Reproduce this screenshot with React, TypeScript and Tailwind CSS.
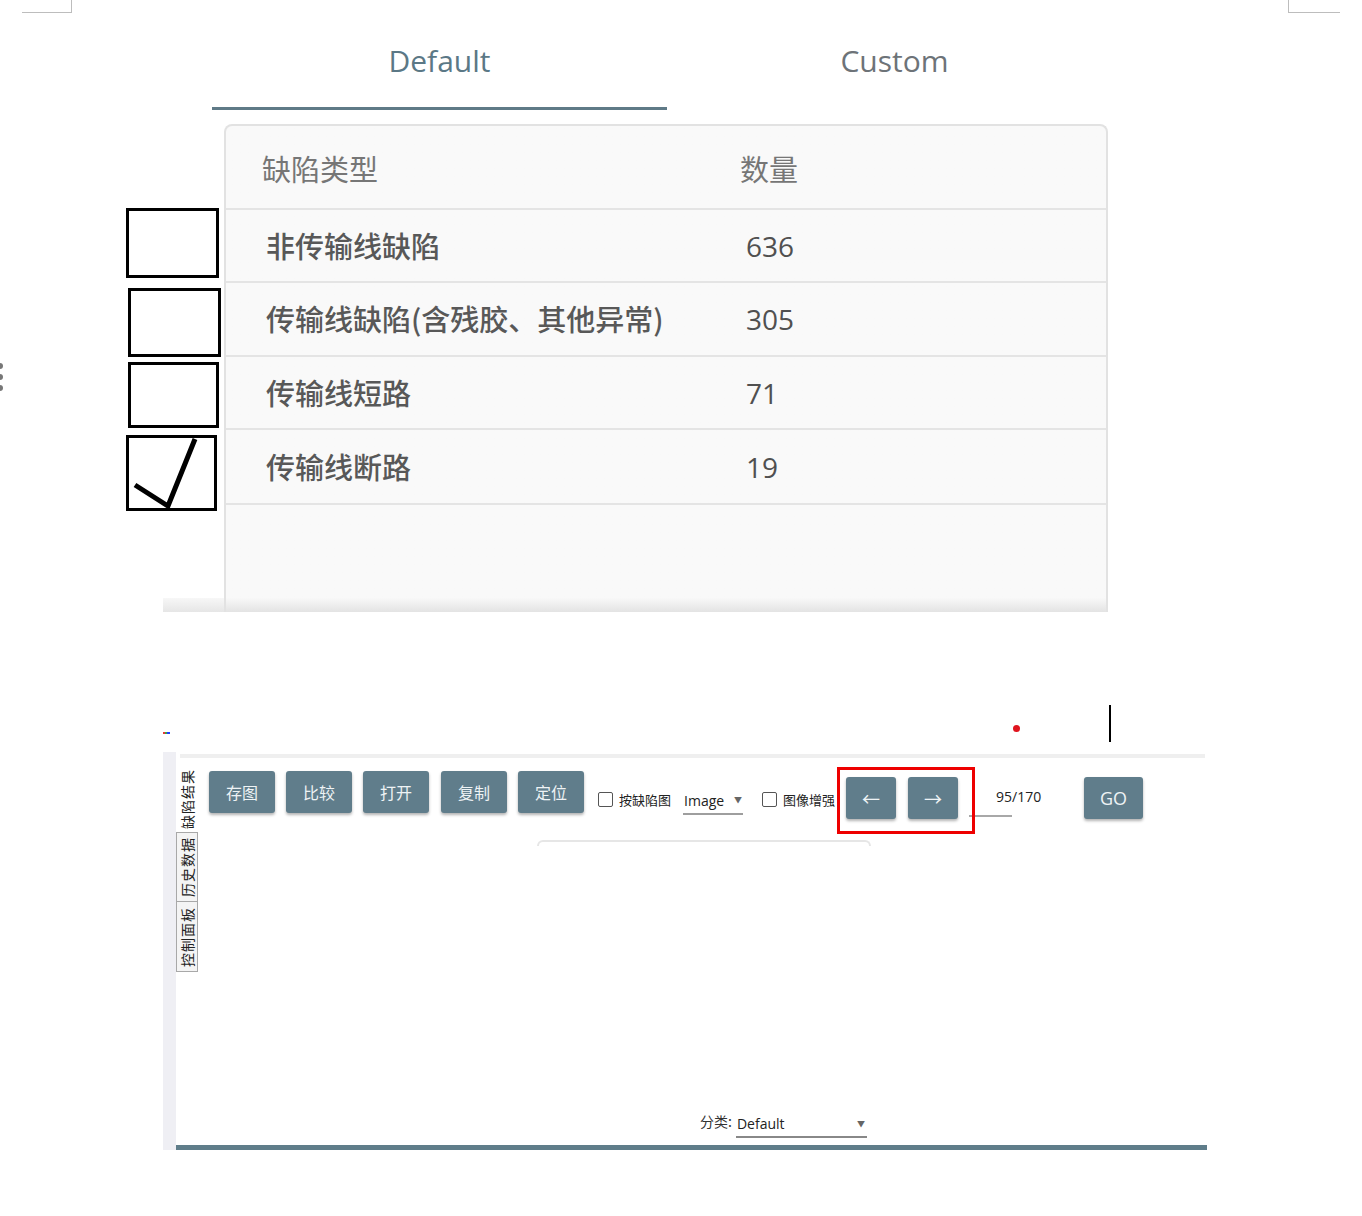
import React from "react";

const cjk = { fontFamily: '"Noto Sans CJK SC", "Noto Sans", sans-serif' };
const latin = { fontFamily: '"Open Sans", "Noto Sans CJK SC", sans-serif' };

const rows = [
  { name: "非传输线缺陷", count: "636", h: "h-[73px]" },
  { name: "传输线缺陷(含残胶、其他异常)", count: "305", h: "h-[74px]" },
  { name: "传输线短路", count: "71", h: "h-[73px]" },
  { name: "传输线断路", count: "19", h: "h-[75px]" },
];

function Btn({ children, w = "w-[66px]", cls = "" }: { children: React.ReactNode; w?: string; cls?: string }) {
  return (
    <div
      className={`${w} h-[42px] rounded-[3px] bg-[#607d8b] text-[#eef3f5] flex items-center justify-center text-[16px] shadow-[0_2px_3px_rgba(0,0,0,0.3)] ${cls}`}
    >
      {children}
    </div>
  );
}

function SmallCheck() {
  return <div className="w-[15px] h-[15px] border border-[#555] rounded-[2px] bg-white shrink-0" />;
}

function VText({ children }: { children: React.ReactNode }) {
  return (
    <span className="[writing-mode:vertical-rl] [text-orientation:sideways] rotate-180 tracking-[1px] leading-none">
      {children}
    </span>
  );
}

export default function App() {
  return (
    <div className="relative w-[1362px] h-[1216px] bg-white overflow-hidden" style={cjk}>
      {/* page corner marks */}
      <div className="absolute left-[22px] top-[12px] w-[50px] h-px bg-[#bdbdbd]" />
      <div className="absolute left-[71px] top-0 w-px h-[13px] bg-[#bdbdbd]" />
      <div className="absolute left-[1288px] top-[12px] w-[52px] h-px bg-[#bdbdbd]" />
      <div className="absolute left-[1288px] top-0 w-px h-[13px] bg-[#bdbdbd]" />
      {/* dots at left edge */}
      <div className="absolute left-[-3px] top-[363px] w-[6px] h-[6px] rounded-full bg-[#777]" />
      <div className="absolute left-[-3px] top-[374px] w-[6px] h-[6px] rounded-full bg-[#777]" />
      <div className="absolute left-[-3px] top-[385px] w-[6px] h-[6px] rounded-full bg-[#777]" />

      {/* tabs */}
      <div className="flex ml-[212px] pt-[40px]" style={latin}>
        <div className="w-[455px] flex flex-col items-center">
          <div className="h-[42px] leading-[42px] text-[30px] text-[#5b7886]">Default</div>
          <div className="mt-[25px] h-[3px] w-full bg-[#5f7a87]" />
        </div>
        <div className="w-[455px] flex flex-col items-center">
          <div className="h-[42px] leading-[42px] text-[30px] text-[#6d7378]">Custom</div>
        </div>
      </div>

      {/* table area */}
      <div className="relative mt-[14px] ml-[163px] w-[945px] pl-[61px]">
        <div className="absolute left-0 bottom-0 w-[61px] h-[14px] bg-gradient-to-b from-[#f7f7f7] to-[#e6e6e6]" />
        <div className="h-[488px] border-2 border-b-0 border-[#e2e2e2] rounded-t-[8px] flex flex-col bg-gradient-to-b from-[#f9f9f9] from-[97%] to-[#e3e3e3]">
          <div className="h-[84px] shrink-0 flex items-center border-b-2 border-[#e4e4e4] text-[29px] text-[#767676] pt-[4px]">
            <div className="w-[514px] pl-[36px]">缺陷类型</div>
            <div>数量</div>
          </div>
          {rows.map((r) => (
            <div key={r.name} className={`${r.h} shrink-0 flex items-center border-b-2 border-[#e4e4e4] text-[29px] text-[#585858]`}>
              <div className="w-[514px] pl-[40px] whitespace-nowrap font-medium">{r.name}</div>
              <div className="pl-[6px] text-[28px] text-[#505050]" style={latin}>
                {r.count}
              </div>
            </div>
          ))}
        </div>
      </div>

      {/* annotation checkboxes */}
      <div className="absolute left-[126px] top-[208px] w-[93px] h-[70px] border-[3px] border-black" />
      <div className="absolute left-[128px] top-[288px] w-[93px] h-[69px] border-[3px] border-black" />
      <div className="absolute left-[128px] top-[362px] w-[91px] h-[66px] border-[3px] border-black" />
      <div className="absolute left-[126px] top-[435px] w-[91px] h-[76px] border-[3px] border-black">
        <svg width="85" height="70" viewBox="0 0 85 70" className="absolute left-0 top-0">
          <polyline points="6,47 39,68 66,1" fill="none" stroke="black" strokeWidth="5" strokeLinejoin="miter" />
        </svg>
      </div>

      {/* misc marks */}
      <div className="absolute left-[163px] top-[732px] flex h-[2px]">
        <div className="w-[2px] bg-[#e53935]" />
        <div className="w-[2px] bg-[#43a047]" />
        <div className="w-[3px] bg-[#1e40ff]" />
      </div>
      <div className="absolute left-[1013px] top-[725px] w-[7px] h-[7px] rounded-full bg-[#e0141e]" />
      <div className="absolute left-[1109px] top-[705px] w-[2px] h-[37px] bg-black" />

      {/* bottom application panel */}
      <div className="flex ml-[163px] mt-[140px] w-[1044px] h-[398px]">
        <div className="w-[13px] h-full bg-[#efeff4]" />
        <div className="flex-1 flex flex-col">
          <div className="mt-[2px] ml-[4px] w-[1025px] h-[4px] bg-[#efefef]" />
          <div className="flex flex-1">
            {/* vertical tabs */}
            <div className="w-[22px] pt-[7px] flex flex-col text-[14px] text-[#222]">
              <div className="h-[67px] flex items-center justify-center">
                <VText>缺陷结果</VText>
              </div>
              <div className="h-[70px] flex items-center justify-center border border-[#a8a8a8] bg-[#f4f4f4]">
                <VText>历史数据</VText>
              </div>
              <div className="h-[70px] flex items-center justify-center border border-t-0 border-[#a8a8a8] bg-[#f4f4f4]">
                <VText>控制面板</VText>
              </div>
            </div>
            {/* main */}
            <div className="flex-1 flex flex-col pl-[11px]">
              <div className="flex items-start mt-[13px] h-[48px]">
                <Btn>存图</Btn>
                <Btn cls="ml-[11px]">比较</Btn>
                <Btn cls="ml-[11px]">打开</Btn>
                <Btn cls="ml-[12px]">复制</Btn>
                <Btn cls="ml-[11px]">定位</Btn>
                <div className="ml-[14px] mt-[21px] flex items-center h-[15px]">
                  <SmallCheck />
                  <span className="ml-[6px] text-[13px] text-[#222] whitespace-nowrap">按缺陷图</span>
                </div>
                <div className="ml-[12px] mt-[16px] w-[60px] h-[28px] border-b-2 border-[#9e9e9e] flex items-center justify-between text-[14px] text-[#222]" style={latin}>
                  <span className="pl-[1px]">Image</span>
                  <span className="text-[8px] text-[#666] pr-[1px]">▼</span>
                </div>
                <div className="ml-[19px] mt-[21px] flex items-center h-[15px]">
                  <SmallCheck />
                  <span className="ml-[6px] text-[13px] text-[#222] whitespace-nowrap">图像增强</span>
                </div>
                <Btn w="w-[50px]" cls="ml-[11px] mt-[6px] text-[18px]">←</Btn>
                <Btn w="w-[50px]" cls="ml-[12px] mt-[6px] text-[18px]">→</Btn>
                <div className="ml-[11px] mt-[6px] w-[43px] h-[40px] border-b-2 border-[#a8a8a8] flex items-center">
                  <span className="pl-[27px] whitespace-nowrap text-[14px] text-[#222]" style={latin}>
                    95/170
                  </span>
                </div>
                <Btn w="w-[59px]" cls="ml-[72px] mt-[6px] text-[18px]">
                  <span style={latin}>GO</span>
                </Btn>
              </div>
              <div className="ml-[328px] mt-[21px] w-[334px] h-[6px] border-t-2 border-x-2 border-[#e6e6e6] rounded-t-[6px]" />
              <div className="flex-1" />
              <div className="flex items-end ml-[491px] mb-[12px]">
                <span className="text-[14px] text-[#333] pb-[6px]">分类:</span>
                <div className="ml-[4px] w-[131px] h-[26px] border-b-2 border-[#888] flex items-center justify-between text-[14px] text-[#222]" style={latin}>
                  <span className="pl-[1px] pb-[2px]">Default</span>
                  <span className="text-[8px] text-[#666] pr-[2px]">▼</span>
                </div>
              </div>
            </div>
          </div>
        </div>
      </div>
      <div className="ml-[176px] -mt-[5px] w-[1031px] h-[5px] bg-[#5f7d8a]" />

      {/* red highlight box */}
      <div className="absolute left-[837px] top-[767px] w-[138px] h-[67px] border-[3px] border-[#ee0000]" />
    </div>
  );
}
